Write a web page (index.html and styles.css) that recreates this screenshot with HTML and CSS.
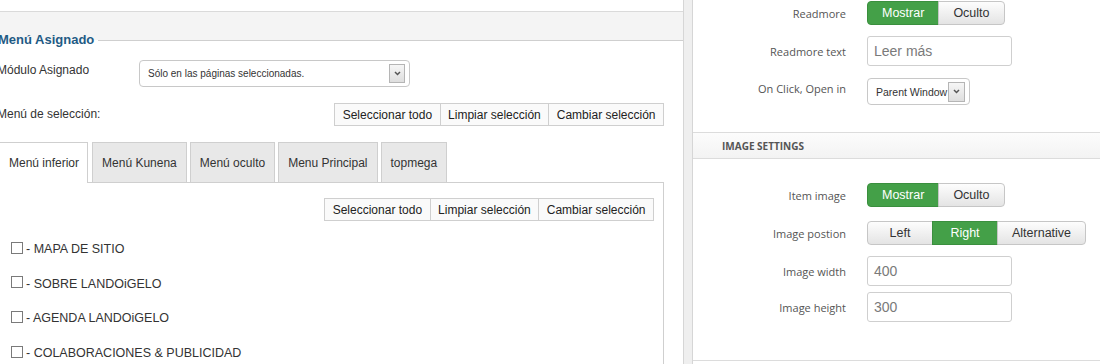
FILE: index.html
```html
<!DOCTYPE html>
<html lang="es">
<head>
  <meta charset="UTF-8">
  <title>Menú Asignado</title>
  <link rel="stylesheet" href="styles.css">
</head>
<body>
  <div class="page">

    <div class="left">
      <div class="top-card"></div>

      <fieldset class="assign">
        <legend>Menú Asignado</legend>

        <div class="row module-row">
          <label class="row-label">Módulo Asignado</label>
          <div class="select module-select">
            <span>Sólo en las páginas seleccionadas.</span>
            <span class="arrow"><svg width="7" height="5" viewBox="0 0 7 5"><path d="M1 1l2.5 2.5L6 1" fill="none" stroke="#555" stroke-width="1.5"/></svg></span>
          </div>
        </div>

        <div class="row sel-row">
          <span class="row-label">Menú de selección:</span>
          <div class="btn-group">
            <button>Seleccionar todo</button>
            <button>Limpiar selección</button>
            <button>Cambiar selección</button>
          </div>
        </div>

        <div class="tabs">
          <div class="tab active">Menú inferior</div>
          <div class="tab">Menú Kunena</div>
          <div class="tab">Menú oculto</div>
          <div class="tab">Menu Principal</div>
          <div class="tab">topmega</div>
        </div>

        <div class="tab-body">
          <div class="btn-group">
            <button>Seleccionar todo</button>
            <button>Limpiar selección</button>
            <button>Cambiar selección</button>
          </div>
          <ul class="menu-items">
            <li><input type="checkbox"><span>- MAPA DE SITIO</span></li>
            <li><input type="checkbox"><span>- SOBRE LANDOiGELO</span></li>
            <li><input type="checkbox"><span>- AGENDA LANDOiGELO</span></li>
            <li><input type="checkbox"><span>- COLABORACIONES &amp; PUBLICIDAD</span></li>
          </ul>
        </div>
      </fieldset>
    </div>

    <div class="gutter"></div>

    <div class="right">
      <div class="section">
        <div class="field f-readmore">
          <span class="field-label">Readmore</span>
          <div class="toggle">
            <span class="tg on">Mostrar</span>
            <span class="tg">Oculto</span>
          </div>
        </div>
        <div class="field f-text">
          <span class="field-label">Readmore text</span>
          <div class="input">Leer más</div>
        </div>
        <div class="field f-open">
          <span class="field-label">On Click, Open in</span>
          <div class="select small-select">
            <span>Parent Window</span>
            <span class="arrow"><svg width="7" height="5" viewBox="0 0 7 5"><path d="M1 1l2.5 2.5L6 1" fill="none" stroke="#555" stroke-width="1.5"/></svg></span>
          </div>
        </div>
      </div>

      <div class="section-head">IMAGE SETTINGS</div>

      <div class="section image-section">
        <div class="field f-item">
          <span class="field-label">Item image</span>
          <div class="toggle">
            <span class="tg on">Mostrar</span>
            <span class="tg">Oculto</span>
          </div>
        </div>
        <div class="field f-pos">
          <span class="field-label">Image postion</span>
          <div class="toggle">
            <span class="tg">Left</span>
            <span class="tg on">Right</span>
            <span class="tg">Alternative</span>
          </div>
        </div>
        <div class="field f-width">
          <span class="field-label">Image width</span>
          <div class="input">400</div>
        </div>
        <div class="field f-height">
          <span class="field-label">Image height</span>
          <div class="input">300</div>
        </div>
      </div>
    </div>

  </div>
</body>
</html>
```

FILE: styles.css
```css
* {
  box-sizing: border-box;
}

html, body {
  margin: 0;
  height: 100%;
}

body {
  font-family: "Liberation Sans", Arial, sans-serif;
  font-size: 12px;
  color: #333;
  background: #fff;
  overflow: hidden;
}

.page {
  display: flex;
  height: 364px;
}

/* left column */

.left {
  width: 684px;
  flex: none;
  display: flex;
  flex-direction: column;
  background: #f4f4f4;
  border-right: 1px solid #d6d6d6;
  overflow: hidden;
}

.top-card {
  height: 12px;
  flex: none;
  background: #fff;
  border-bottom: 1px solid #dadada;
}

.assign {
  flex: 1;
  min-width: 0;
  margin: 20px 0 0 -3px;
  padding: 0 19px 0 0;
  border: 0;
  border-top: 1px solid #cfcfcf;
  background: #fff;
}

.assign legend {
  margin-left: 1px;
  padding: 0 4px 0 0;
  font-size: 13px;
  font-weight: bold;
  line-height: 16px;
  color: #1f5b85;
}

.row {
  display: flex;
  align-items: center;
}

.row-label {
  width: 142px;
  flex: none;
  line-height: 15px;
}

.module-row {
  margin-top: 12px;
  height: 27px;
}

.module-row .row-label {
  align-self: flex-start;
  margin-top: 3px;
}

.sel-row {
  margin-top: 16px;
  height: 23px;
}

.sel-row .btn-group {
  margin-left: auto;
}

.select {
  display: flex;
  align-items: center;
  height: 27px;
  border: 1px solid #c8c8c8;
  border-radius: 4px;
  background: #fff;
  font-size: 10px;
  color: #333;
}

.module-select {
  width: 271px;
  padding: 0 4px 0 8px;
}

.select .arrow {
  margin-left: auto;
  width: 16px;
  height: 19px;
  display: flex;
  align-items: center;
  justify-content: center;
  border: 1px solid #b5b5b5;
  background: linear-gradient(#f6f6f6, #dedede);
}

.btn-group {
  display: flex;
  height: 23px;
}

.btn-group button {
  margin: 0;
  margin-left: -1px;
  padding: 0 7.5px;
  height: 23px;
  font-family: inherit;
  font-size: 12px;
  color: #222;
  background: #fafafa;
  border: 1px solid #cfcfcf;
  border-radius: 0;
}

/* tabs */

.tabs {
  display: flex;
  align-items: flex-start;
  margin-top: 16px;
  height: 41px;
}

.tab {
  height: 40px;
  margin-right: 3px;
  padding: 0 9px;
  display: flex;
  align-items: center;
  background: #e8e8e8;
  border: 1px solid #cfcfcf;
  border-bottom: 0;
  color: #333;
}

.tab.active {
  height: 41px;
  padding: 0 8px 0 11px;
  margin-right: 4px;
  background: #fff;
  position: relative;
  z-index: 1;
}

.tab-body {
  margin-top: -1px;
  height: 200px;
  border: 1px solid #cfcfcf;
  border-bottom: 0;
  padding: 15px 9px 0 0;
}

.tab-body .btn-group {
  justify-content: flex-end;
}

.menu-items {
  list-style: none;
  margin: 11px 0 0;
  padding: 0 0 0 13px;
}

.menu-items li {
  display: flex;
  align-items: center;
  height: 34.6px;
  font-size: 12.5px;
  color: #333;
}

.menu-items input {
  appearance: none;
  margin: -3px 3px 0 0;
  width: 12px;
  height: 12px;
  border: 1px solid #7a7a7a;
  background: #fff;
}

/* gutter */

.gutter {
  width: 8px;
  flex: none;
  background: #efefef;
}

/* right column */

.right {
  flex: 1;
  border-left: 1px solid #d6d6d6;
  background: #fff;
}

.field {
  display: flex;
  align-items: center;
}

.field-label {
  width: 174px;
  flex: none;
  padding-right: 21px;
  text-align: right;
  font-family: "Open Sans", sans-serif;
  font-size: 11px;
  color: #555;
}

.f-readmore { margin-top: 1px; height: 24px; }
.f-text { margin-top: 11px; height: 30px; }
.f-open { margin-top: 12px; height: 27px; }
.f-open .field-label { margin-top: -7px; }

.toggle {
  display: flex;
  height: 24px;
}

.tg {
  min-width: 66px;
  padding: 0 14px;
  display: flex;
  align-items: center;
  justify-content: center;
  font-size: 12.5px;
  color: #333;
  background: linear-gradient(#fdfdfd, #e4e4e4);
  border: 1px solid #c6c6c6;
  margin-left: -1px;
}

.tg:first-child {
  margin-left: 0;
  border-radius: 4px 0 0 4px;
}

.tg:last-child {
  border-radius: 0 4px 4px 0;
}

.tg.on {
  color: #fff;
  background: #44a048;
  border-color: #3a8f3e;
}

.f-readmore .tg.on,
.f-item .tg.on {
  min-width: 72px;
}

.input {
  width: 145px;
  height: 30px;
  display: flex;
  align-items: center;
  padding-left: 6px;
  border: 1px solid #cfcfcf;
  border-radius: 3px;
  font-size: 14px;
  color: #7a7a7a;
}

.small-select {
  width: 103px;
  padding: 0 4px 0 8px;
  font-size: 10.5px;
}

.small-select .arrow {
  width: 17px;
  height: 20px;
}

.section-head {
  margin-top: 27px;
  height: 27px;
  display: flex;
  align-items: center;
  padding-left: 29px;
  border-top: 1px solid #dcdcdc;
  border-bottom: 1px solid #dcdcdc;
  background: linear-gradient(#fcfcfc, #f3f3f3);
  font-family: "Open Sans", sans-serif;
  font-size: 10px;
  font-weight: bold;
  color: #555;
}

.image-section {
  padding-bottom: 38px;
  border-bottom: 1px solid #dcdcdc;
}

.f-item { margin-top: 24px; height: 24px; }
.f-pos { margin-top: 14px; height: 24px; }
.f-width { margin-top: 11px; height: 30px; }
.f-height { margin-top: 6px; height: 30px; }
```
